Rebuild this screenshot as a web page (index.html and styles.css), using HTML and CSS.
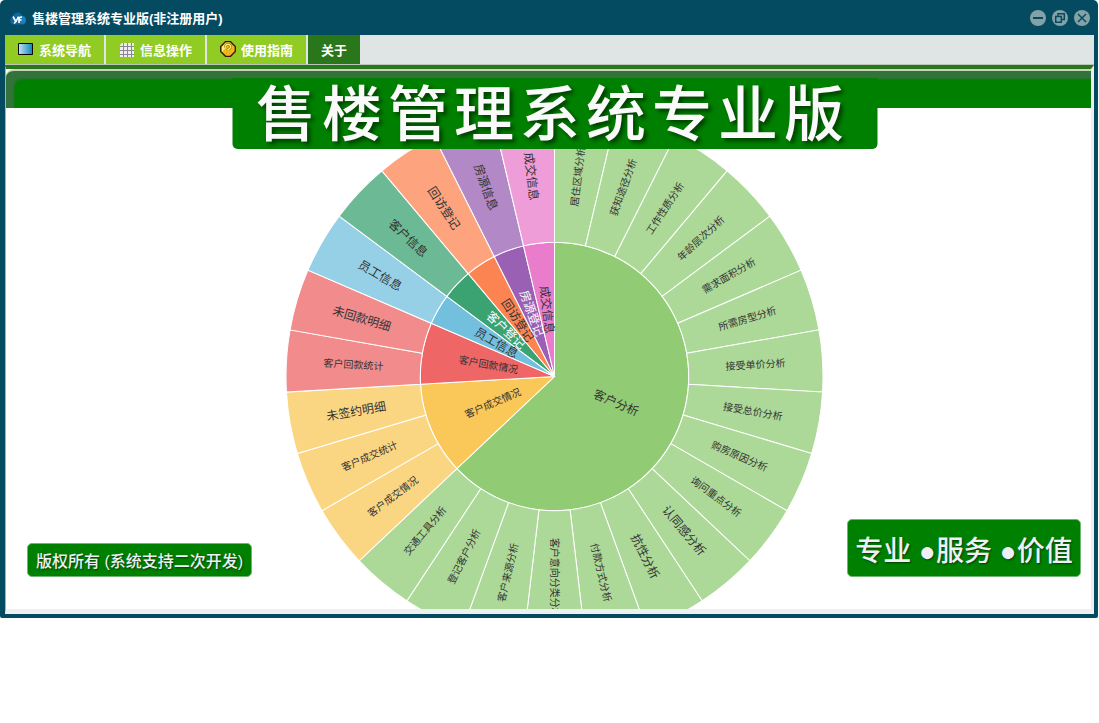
FILE: index.html
```html
<!DOCTYPE html>
<html lang="zh-CN">
<head>
<meta charset="utf-8">
<title>售楼管理系统专业版(非注册用户)</title>
<link rel="stylesheet" href="styles.css">
</head>
<body>
<div class="window">
  <header class="titlebar">
    <svg class="logo" viewBox="0 0 16 14" aria-hidden="true">
      <path d="M3 12.500a3 3 0 0 1-2.500-4A3 3 0 0 1 2.500 5 5 5 0 0 1 12 3.500a4 4 0 0 1 3.500 5A3 3 0 0 1 13 12.500Z" fill="#1266a0"/>
      <circle cx="12" cy="8" r="4" fill="#2590cb" opacity=".6"/>
      <path d="M3 4.500l2.500 4.500M8.500 4.500L6 9.500 4 11.500M9 11V7q0-2 3-2M9 8h2.500" fill="none" stroke="#fff" stroke-width="1.600"/>
    </svg>
    <h1 class="title">售楼管理系统专业版(非注册用户)</h1>
    <div class="controls">
      <button class="control" type="button" aria-label="最小化"><svg viewBox="0 0 16 16"><circle cx="8" cy="8" r="8"/><path class="thick" d="M3 8h10"/></svg></button>
      <button class="control" type="button" aria-label="还原"><svg viewBox="0 0 16 16"><circle cx="8" cy="8" r="8"/><path d="M3.700 6.500h5.600v5.800H3.700zM6 6V3.700h6.300V9.500H9.700"/></svg></button>
      <button class="control" type="button" aria-label="关闭"><svg viewBox="0 0 16 16"><circle cx="8" cy="8" r="8"/><path d="M4 4l8 8M12 4l-8 8"/></svg></button>
    </div>
  </header>
  <nav class="menu">
    <button class="menu-item" type="button">
      <svg class="icon" viewBox="0 0 16 16" aria-hidden="true"><defs><linearGradient id="screen" x2="1"><stop stop-color="#bfe6f5"/><stop offset="1" stop-color="#1383b8"/></linearGradient></defs><path d="M.5 2.500h14v11H.5z" fill="url(#screen)" stroke="#000"/></svg>
      系统导航
    </button>
    <button class="menu-item" type="button">
      <svg class="icon" viewBox="0 0 16 16" aria-hidden="true"><path d="M3 2h12v14H1V4z" fill="#f0edf0"/><path d="M4.500 2v14M8.500 2v14M12.500 2v14M1 5.500h14M1 9.500h14M1 13.500h14" stroke="#8b8790"/></svg>
      信息操作
    </button>
    <button class="menu-item" type="button">
      <svg class="icon" viewBox="0 0 16 16" aria-hidden="true"><path d="M5.500.700h5l4.800 4.800v5l-4.800 4.800h-5L.7 10.500v-5z" fill="#f3b51c" stroke="#39130a" stroke-width="1.300"/><path d="M5.500 1.800h4.700L2 11V6z" fill="#ffef71"/><path d="M5.300 6.500V5l1.500-1.500h2.500L10.700 5v1.500L8 8.700v1M8 11.500v1.500" fill="none" stroke="#9a8500" stroke-width="2.600"/><path d="M5.300 6.500V5l1.500-1.500h2.500L10.700 5v1.500L8 8.700v1M8 11.500v1.500" fill="none" stroke="#fff47f" stroke-width="1.200"/></svg>
      使用指南
    </button>
    <button class="menu-item active" type="button">关于</button>
  </nav>
  <main class="content">
    <div class="band"></div>
    <h2 class="banner">售楼管理系统专业版</h2>
    <section class="stage">
      <svg class="sunburst" id="sunburst" viewBox="-268 -268 536 536" role="img" aria-label="系统功能图"></svg>
    </section>
    <p class="tag copyright">版权所有 (系统支持二次开发)</p>
    <p class="tag slogan">专业 ●服务 ●价值</p>
  </main>
</div>
<script src="script.js"></script>
</body>
</html>
```
FILE: styles.css
```css
* { box-sizing: border-box; }

body {
  margin: 0;
  background: #fff;
  font-family: "Liberation Sans", "Noto Sans CJK SC", sans-serif;
}

.window {
  display: flex;
  flex-direction: column;
  height: calc(100vh - 105px);
  margin-right: 1px;
  padding: 0 4px 4px 5px;
  background: #044b62;
  border-radius: 5px 5px 2px 2px;
}

.titlebar {
  display: flex;
  align-items: center;
  flex: none;
  height: 35px;
  padding: 2px 4px 0 5px;
}

.logo { width: 16px; height: 14px; }

.title {
  flex: 1;
  margin: 0 0 0 6px;
  color: #fff;
  font-size: 13px;
  line-height: 20px;
}

.controls { display: flex; gap: 6px; padding-bottom: 2px; }

.control {
  width: 16px;
  height: 16px;
  padding: 0;
  border: 0;
  background: none;
}

.control svg { display: block; }
.control circle { fill: #84a1a5; }
.control path { fill: none; stroke: #044b62; stroke-width: 1.5; }
.control .thick { stroke-width: 2; }

.menu {
  display: flex;
  flex: none;
  gap: 2px;
  height: 30px;
  background: #dfe5e5;
  border-bottom: 1px solid #b9c6b9;
}

.menu-item {
  display: flex;
  align-items: center;
  gap: 5px;
  padding: 3px 13px 0;
  border: 0;
  background: #90cc23;
  color: #fff;
  font: bold 13px/20px "Liberation Sans", "Noto Sans CJK SC", sans-serif;
}

.menu-item.active { background: #2a771b; }

.icon { width: 16px; height: 16px; margin-top: -4px; }

.content {
  position: relative;
  display: flex;
  flex-direction: column;
  flex: 1;
  min-height: 0;
  border-top: 4px solid #2a771b;
  border-bottom: 5px solid #ecf0f0;
  border-right: 3px solid #ecf0f0;
  border-left: 1px solid #b5b584;
  background: #fff;
}

.band {
  flex: none;
  height: 39px;
  border-top: 2px solid #c8d4b8;
  border-top-left-radius: 8px;
  background: #008000;
  box-shadow: inset 9px 9px 2px -1px #33723a;
}

.banner {
  position: absolute;
  top: 9px;
  left: 50%;
  margin: 0;
  padding: 4px 27px 0 24px;
  transform: translateX(-50%);
  translate: 6px;
  border-radius: 0 0 5px 5px;
  background: #008000;
  color: #fafafa;
  font-size: 60px;
  font-weight: 500;
  line-height: 67px;
  letter-spacing: 6px;
  white-space: nowrap;
  text-shadow: 3px 3px 4px #003c00;
}

.stage {
  flex: 1;
  min-height: 0;
  padding-left: 12px;
  overflow: hidden;
}

.sunburst {
  display: block;
  width: 537px;
  height: 537px;
  margin: 0 auto;
}

.sunburst path { stroke: #fff; stroke-width: 1; }

.sunburst text {
  fill: #333;
  font-size: 12px;
  text-anchor: middle;
  dominant-baseline: central;
}

.sunburst .small { font-size: 10px; }
.sunburst .light { fill: #fff; }

.tag {
  position: absolute;
  margin: 0;
  border: 1px solid #70b870;
  border-radius: 5px;
  background: #008000;
  color: #eef0f5;
  font-weight: 500;
  white-space: nowrap;
  text-align: center;
  text-shadow: 1px 1px 2px #003c00;
}

.copyright {
  left: 21px;
  bottom: 32px;
  min-width: 225px;
  padding-top: 4px;
  font-size: 16px;
  line-height: 28px;
}

.slogan {
  right: 10px;
  bottom: 32px;
  min-width: 234px;
  padding-top: 8px;
  font-size: 28px;
  line-height: 48px;
}
```
FILE: script.js
```js
const groups = [
  ["客户分析", "#91cc75", ["居住区域分析", "获知途径分析", "工作性质分析", "年龄层次分析", "需求面积分析", "所需房型分析", "接受单价分析", "接受总价分析", "购房原因分析", "询问重点分析", "认同感分析", "抗性分析", "付款方式分析", "客户意向分类分析", "客户来源分析", "登记客户分析", "交通工具分析"]],
  ["客户成交情况", "#fac858", ["客户成交情况", "客户成交统计", "未签约明细"]],
  ["客户回款情况", "#ee6666", ["客户回款统计", "未回款明细"]],
  ["员工信息", "#73c0de", ["员工信息"]],
  ["客户登记", "#3ba272", ["客户信息"], true],
  ["回访登记", "#fc8452", ["回访登记"]],
  ["房源登记", "#9a60b4", ["房源信息"], true],
  ["成交信息", "#ea7ccc", ["成交信息"]]
];

const INNER = 134;
const OUTER = 268;
const svg = document.getElementById("sunburst");
const total = groups.reduce((sum, group) => sum + group[2].length, 0);
const step = 360 / total;

function point(radius, degrees) {
  const a = degrees * Math.PI / 180;
  return [radius * Math.sin(a), -radius * Math.cos(a)];
}

function add(name, attributes, text) {
  const node = document.createElementNS("http://www.w3.org/2000/svg", name);
  for (const key in attributes) node.setAttribute(key, attributes[key]);
  if (text) node.textContent = text;
  svg.appendChild(node);
}

function sector(r0, r1, from, to, fill, opacity) {
  const large = to - from > 180 ? 1 : 0;
  const d = `M${point(r0, from)}L${point(r1, from)}A${r1} ${r1} 0 ${large} 1 ${point(r1, to)}L${point(r0, to)}A${r0} ${r0} 0 ${large} 0 ${point(r0, from)}Z`;
  add("path", { d, fill, "fill-opacity": opacity });
}

function label(text, radius, angle, light) {
  const [x, y] = point(radius, angle);
  const turn = angle > 180 ? angle + 90 : angle - 90;
  const names = [text.length > 5 ? "small" : "", light ? "light" : ""].join(" ").trim();
  add("text", { transform: `translate(${x} ${y}) rotate(${turn})`, class: names }, text);
}

const labels = [];
let index = 0;
for (const [name, color, children, light] of groups) {
  const from = index * step;
  const to = (index + children.length) * step;
  sector(0, INNER, from, to, color, 1);
  labels.push([name, INNER / 2, (from + to) / 2, light]);
  for (const child of children) {
    sector(INNER, OUTER, index * step, (index + 1) * step, color, 0.75);
    labels.push([child, (INNER + OUTER) / 2, (index + 0.5) * step, false]);
    index += 1;
  }
}
labels.forEach(item => label(...item));
```
